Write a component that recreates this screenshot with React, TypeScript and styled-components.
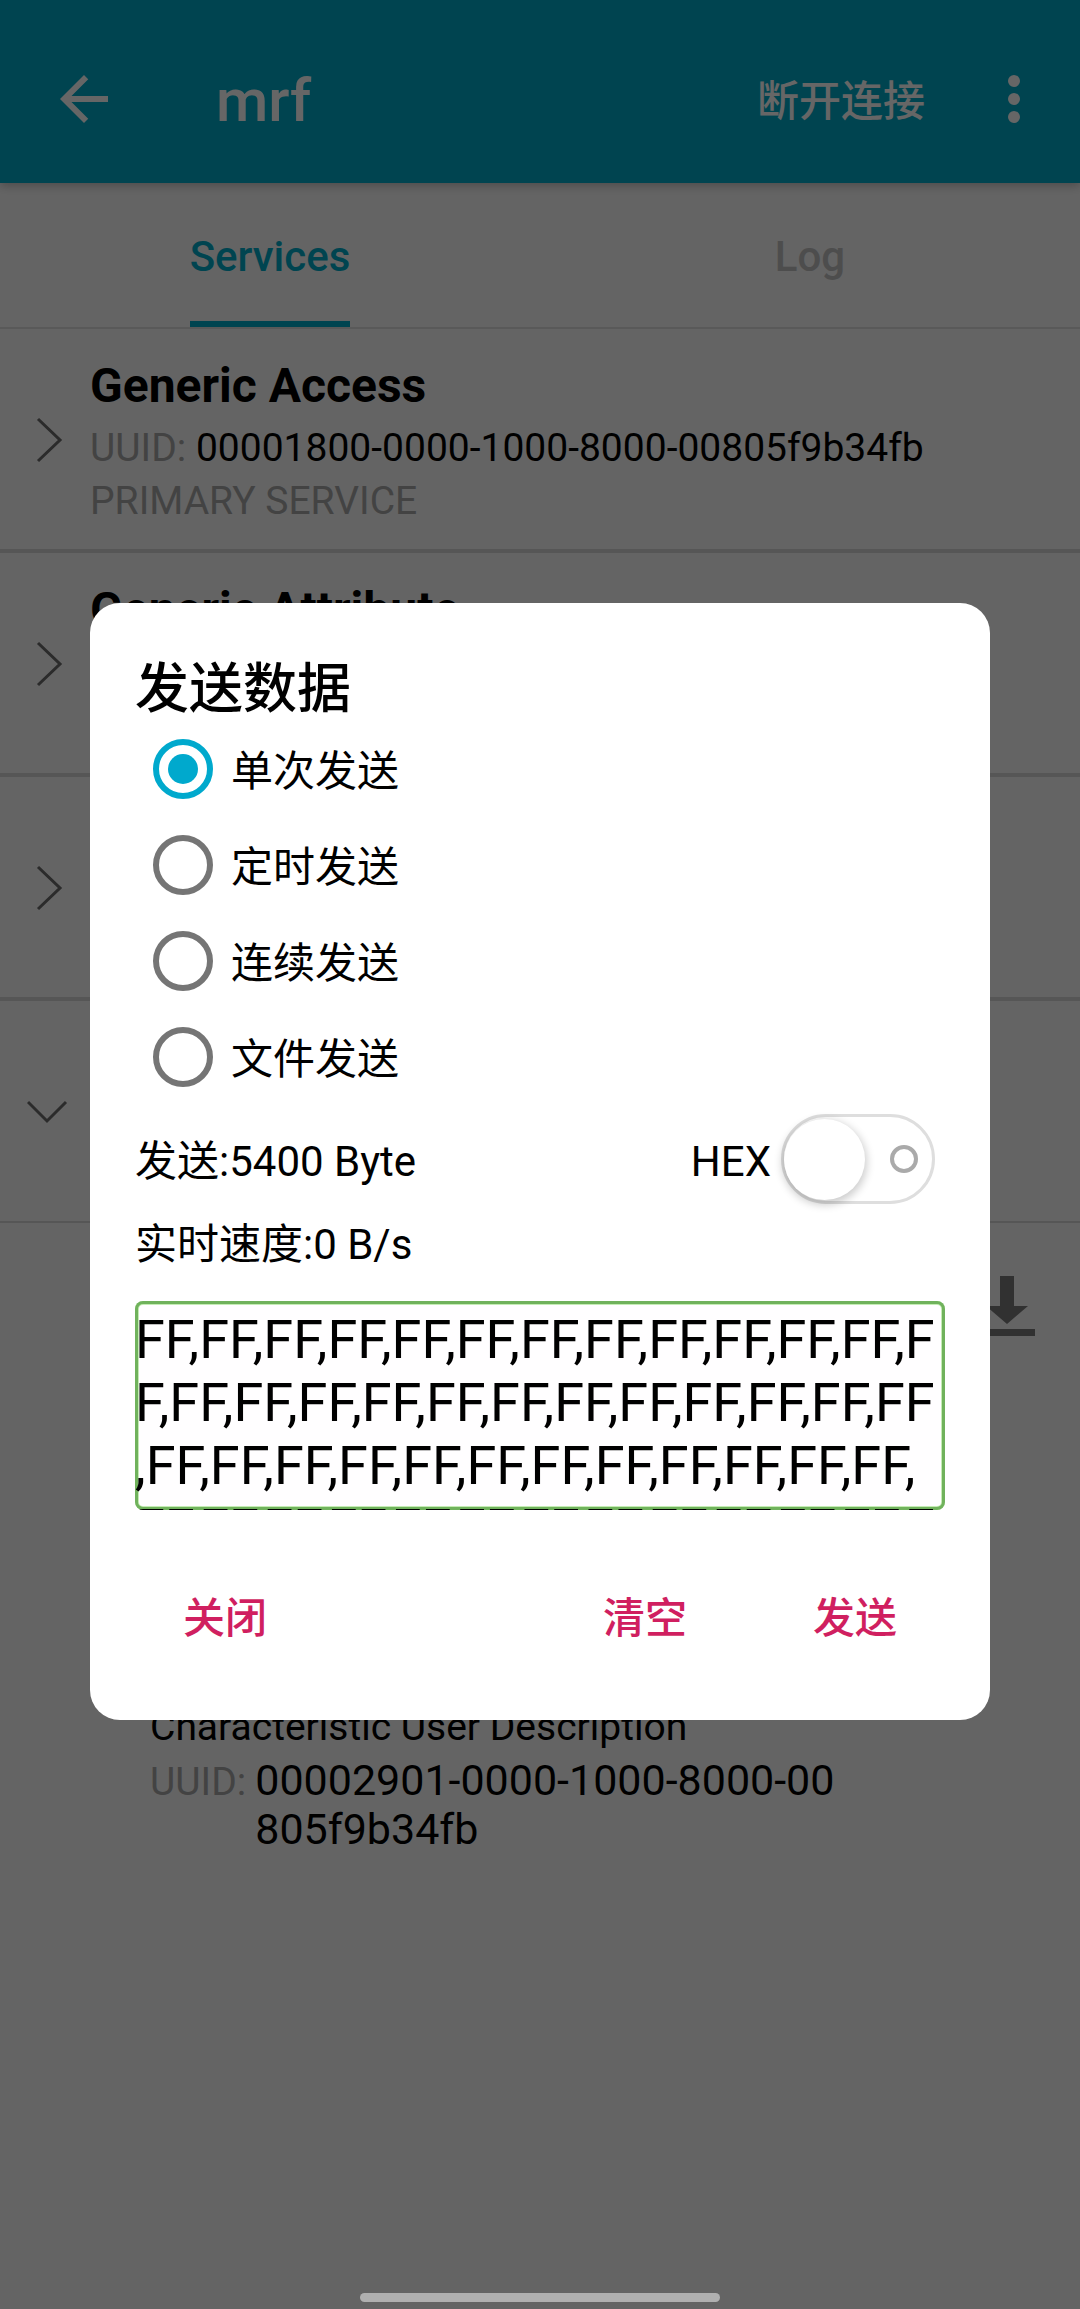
import React, { useState } from "react";
import styled, { createGlobalStyle } from "styled-components";

const GlobalStyle = createGlobalStyle`
  *, *::before, *::after { box-sizing: border-box; }
  body {
    margin: 0;
    background: #fafafa;
    color: #000;
    font-family: Roboto, "Noto Sans CJK SC", sans-serif;
    font-size: 42px;
    line-height: 60px;
  }
  button, input, textarea { font: inherit; color: inherit; margin: 0; }
  button { border: 0; padding: 0; background: none; cursor: pointer; }
`;

const Page = styled.div`
  display: flex;
  flex-direction: column;
  min-height: 100vh;
`;

const AppBar = styled.header`
  display: flex;
  align-items: center;
  height: 183px;
  padding: 15px 30px 0 48px;
  background: #00aac7;
  color: #fff;
  box-shadow: 0 3px 9px rgba(0, 0, 0, 0.24);
  z-index: 1;
`;

const IconButton = styled.button`
  display: flex;
  flex: none;
  svg { display: block; }
`;

const AppTitle = styled.h1`
  flex: 1;
  margin: 0 0 0 96px;
  padding-top: 4px;
  font-size: 60px;
  line-height: 72px;
  font-weight: 500;
`;

const Disconnect = styled.button`
  margin-right: 53px;
  padding-top: 6px;
  font-weight: 500;
`;

const Tabs = styled.div`
  display: grid;
  grid-template-columns: 1fr 1fr;
  height: 146px;
  border-bottom: 2px solid #dedede;
`;

const Tab = styled.button<{ $active?: boolean }>`
  justify-self: center;
  padding-top: 9px;
  font-weight: 500;
  color: ${(p) => (p.$active ? "#00aac7" : "#c0c0c0")};
  border-bottom: 6px solid ${(p) => (p.$active ? "#00aac7" : "transparent")};
`;

const ServiceRow = styled.section<{ $thin?: boolean }>`
  display: flex;
  align-items: center;
  min-height: ${(p) => (p.$thin ? 222 : 224)}px;
  border-bottom: ${(p) => (p.$thin ? 2 : 4)}px solid #d8d8d8;
`;

const Expander = styled(IconButton)<{ $open?: boolean }>`
  justify-content: center;
  width: 90px;
  padding-top: 2px;
  padding-left: ${(p) => (p.$open ? 5 : 9)}px;
`;

const ServiceInfo = styled.div`
  flex: 1;
  align-self: stretch;
  padding-top: 27px;
`;

const ServiceName = styled.h2`
  margin: 0 0 6px;
  font-size: 48px;
  line-height: 60px;
  font-weight: 700;
`;

const InfoLine = styled.div<{ $muted?: boolean }>`
  font-size: 39px;
  line-height: 53px;
  color: ${(p) => (p.$muted ? "#a8a8a8" : "#000")};
`;

const Muted = styled.span`
  color: #a8a8a8;
`;

const Characteristic = styled.section`
  display: flex;
  justify-content: flex-end;
  min-height: 480px;
  padding: 53px 45px 0;
`;

const Descriptor = styled.section`
  padding: 0 240px 0 150px;
  font-size: 39px;
  line-height: 49px;
`;

const DescriptorName = styled.div`
  margin-bottom: 4px;
`;

const UuidPair = styled.div`
  display: flex;
  align-items: baseline;
  gap: 9px;
`;

const UuidValue = styled.span`
  flex: 1;
  font-size: 43px;
  line-break: anywhere;
`;

const Scrim = styled.div`
  position: fixed;
  inset: 0;
  z-index: 2;
  display: flex;
  flex-direction: column;
  justify-content: center;
  padding: 14px 90px 0;
  background: rgba(0, 0, 0, 0.6);
`;

const Dialog = styled.form`
  display: flex;
  flex-direction: column;
  padding: 56px 45px 31px;
  border-radius: 30px;
  background: #fff;
`;

const DialogTitle = styled.h2`
  margin: 0;
  font-size: 54px;
  line-height: 62px;
  font-weight: 500;
`;

const Modes = styled.fieldset`
  margin: 0;
  padding: 0;
  border: 0;
`;

const Mode = styled.label`
  display: flex;
  align-items: center;
  gap: 18px;
  height: 96px;
  padding-left: 18px;
`;

const Caption = styled.span`
  padding-top: 6px;
`;

const Radio = styled.input`
  appearance: none;
  flex: none;
  width: 60px;
  height: 60px;
  padding: 9px;
  border: 6px solid #757575;
  border-radius: 50%;
  &:checked {
    border-color: #00a9cd;
    background: #00a9cd content-box;
  }
`;

const StatRow = styled.div`
  display: flex;
  align-items: center;
  justify-content: space-between;
  height: 108px;
`;

const Speed = styled.div`
  padding-top: 2px;
  margin-bottom: 26px;
`;

const HexLabel = styled.label`
  display: flex;
  align-items: center;
  gap: 10px;
  padding-right: 10px;
`;

const Switch = styled.input`
  appearance: none;
  display: flex;
  align-items: center;
  justify-content: space-between;
  width: 154px;
  height: 90px;
  padding: 0 14px 0 0;
  border: 3px solid #dedede;
  border-radius: 45px;
  background: #fff;
  &::before {
    content: "";
    width: 81px;
    height: 81px;
    border-radius: 50%;
    background: #fff;
    box-shadow: 0 3px 8px 2px rgba(0, 0, 0, 0.2);
  }
  &::after {
    content: "";
    width: 28px;
    height: 28px;
    border: 4px solid #aaa;
    border-radius: 50%;
  }
  &:checked { flex-direction: row-reverse; }
`;

const Payload = styled.textarea`
  display: block;
  width: 100%;
  height: 209px;
  padding: 7px 9px 0 0;
  border: 0;
  border-radius: 8px;
  outline: 0;
  resize: none;
  overflow: hidden;
  background: #fffeff;
  box-shadow: inset 0 0 0 3px #70b25c, inset 0 0 0 4px #c5ecb5;
  font-size: 54px;
  line-height: 63px;
  line-break: anywhere;
`;

const Actions = styled.div`
  display: flex;
  gap: 30px;
  margin-top: 35px;
`;

const Action = styled.button<{ $first?: boolean }>`
  width: 180px;
  height: 144px;
  margin-right: ${(p) => (p.$first ? "auto" : "0")};
  padding-top: 3px;
  font-weight: 500;
  color: #d01f60;
`;

const HomeBar = styled.div`
  position: fixed;
  left: 50%;
  bottom: 7px;
  z-index: 3;
  width: 360px;
  height: 9px;
  margin-left: -180px;
  border-radius: 5px;
  background: #b0b0b0;
`;

const BackIcon = () => (
  <svg width="72" height="72" viewBox="0 0 24 24" fill="currentColor">
    <path d="M20 11H7.83l5.59-5.59L12 4l-8 8 8 8 1.41-1.41L7.83 13H20v-2z" />
  </svg>
);

const MoreIcon = () => (
  <svg width="72" height="72" viewBox="0 0 24 24" fill="currentColor">
    <circle cx="12" cy="6" r="2" />
    <circle cx="12" cy="12" r="2" />
    <circle cx="12" cy="18" r="2" />
  </svg>
);

const ChevronRight = () => (
  <svg width="28" height="46" viewBox="0 0 28 46" fill="none" stroke="#6b6b6b" strokeWidth="3">
    <path d="M2 2l22 21L2 44" />
  </svg>
);

const ChevronDown = () => (
  <svg width="42" height="24" viewBox="0 0 42 24" fill="none" stroke="#6b6b6b" strokeWidth="3">
    <path d="M1 2l19 19L39 2" />
  </svg>
);

const DownloadIcon = () => (
  <svg width="56" height="60" viewBox="0 0 56 60" fill="#7c7c7c">
    <path d="M21 0h14v30h14L28 48 7 30h14zM0 53h56v7H0z" />
  </svg>
);

type Service = { name?: string; uuid?: string; kind?: string; open?: boolean };

const services: Service[] = [
  { name: "Generic Access", uuid: "00001800-0000-1000-8000-00805f9b34fb", kind: "PRIMARY SERVICE" },
  { name: "Generic Attribute" },
  {},
  { open: true },
];

const modes = ["单次发送", "定时发送", "连续发送", "文件发送"];

export default function App() {
  const [mode, setMode] = useState(modes[0]);
  const [hex, setHex] = useState(false);
  const [payload, setPayload] = useState("FF,".repeat(50));

  return (
    <>
      <GlobalStyle />
      <Page>
        <AppBar>
          <IconButton aria-label="Back"><BackIcon /></IconButton>
          <AppTitle>mrf</AppTitle>
          <Disconnect>断开连接</Disconnect>
          <IconButton aria-label="More"><MoreIcon /></IconButton>
        </AppBar>
        <Tabs role="tablist">
          <Tab role="tab" aria-selected="true" $active>Services</Tab>
          <Tab role="tab" aria-selected="false">Log</Tab>
        </Tabs>
        <main>
          {services.map((s, i) => (
            <ServiceRow key={i} $thin={s.open}>
              <Expander $open={s.open} aria-label={s.open ? "Collapse" : "Expand"}>
                {s.open ? <ChevronDown /> : <ChevronRight />}
              </Expander>
              <ServiceInfo>
                {s.name && <ServiceName>{s.name}</ServiceName>}
                {s.uuid && <InfoLine><Muted>UUID:</Muted> {s.uuid}</InfoLine>}
                {s.kind && <InfoLine $muted>{s.kind}</InfoLine>}
              </ServiceInfo>
            </ServiceRow>
          ))}
          <Characteristic>
            <IconButton aria-label="Read"><DownloadIcon /></IconButton>
          </Characteristic>
          <Descriptor>
            <DescriptorName>Characteristic User Description</DescriptorName>
            <UuidPair>
              <Muted>UUID:</Muted>
              <UuidValue>00002901-0000-1000-8000-00805f9b34fb</UuidValue>
            </UuidPair>
          </Descriptor>
        </main>
      </Page>
      <Scrim>
        <Dialog role="dialog" aria-labelledby="send-title" onSubmit={(e) => e.preventDefault()}>
          <DialogTitle id="send-title">发送数据</DialogTitle>
          <Modes aria-labelledby="send-title">
            {modes.map((m) => (
              <Mode key={m}>
                <Radio type="radio" name="mode" checked={mode === m} onChange={() => setMode(m)} />
                <Caption>{m}</Caption>
              </Mode>
            ))}
          </Modes>
          <StatRow>
            <Caption>发送:5400 Byte</Caption>
            <HexLabel>
              <Caption>HEX</Caption>
              <Switch type="checkbox" role="switch" checked={hex} onChange={(e) => setHex(e.target.checked)} />
            </HexLabel>
          </StatRow>
          <Speed>实时速度:0 B/s</Speed>
          <Payload
            aria-label="发送数据"
            spellCheck={false}
            value={payload}
            onChange={(e) => setPayload(e.target.value)}
          />
          <Actions>
            <Action type="button" $first>关闭</Action>
            <Action type="button" onClick={() => setPayload("")}>清空</Action>
            <Action type="submit">发送</Action>
          </Actions>
        </Dialog>
      </Scrim>
      <HomeBar />
    </>
  );
}
